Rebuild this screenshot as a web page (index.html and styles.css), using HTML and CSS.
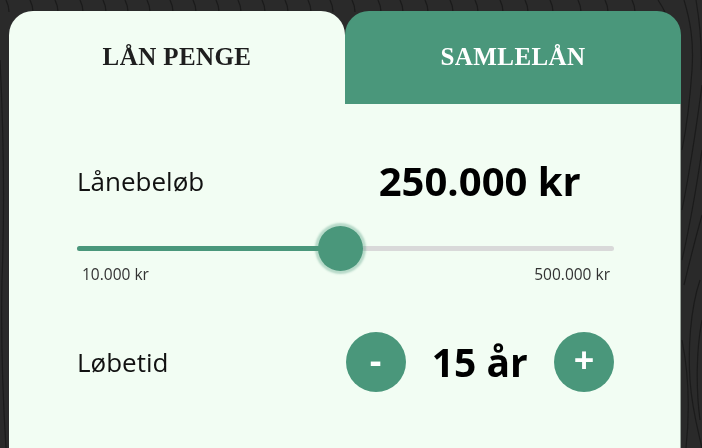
FILE: index.html
```html
<!DOCTYPE html>
<html lang="da">
<head>
<meta charset="utf-8">
<title>Lån penge</title>
<link rel="stylesheet" href="styles.css">
</head>
<body>
<svg class="backdrop" viewBox="0 0 702 448" preserveAspectRatio="none" aria-hidden="true">
  <g fill="none" stroke="#1b1b1b" stroke-width="1.2">
    <path d="M6 0 C8 4 9 8 9 12"/>
    <path d="M30 0 C32 4 33 8 33 12"/>
    <path d="M55 0 C57 4 58 8 58 12"/>
    <path d="M80 0 C82 4 83 8 83 12"/>
    <path d="M103 0 C105 4 106 8 106 12"/>
    <path d="M125 0 C127 4 128 8 128 12"/>
    <path d="M147 0 C149 4 150 8 150 12"/>
    <path d="M170 0 C172 4 173 8 173 12"/>
    <path d="M193 0 C195 4 196 8 196 12"/>
    <path d="M216 0 C218 4 219 8 219 12"/>
    <path d="M238 0 C240 4 241 8 241 12"/>
    <path d="M262 0 C264 4 265 8 265 12"/>
    <path d="M285 0 C287 4 288 8 288 12"/>
    <path d="M308 0 C310 4 311 8 311 12"/>
    <path d="M330 0 C332 4 333 8 333 12"/>
    <path d="M352 0 C354 4 355 8 355 12"/>
    <path d="M378 0 C380 4 381 8 381 12"/>
    <path d="M400 0 C402 4 403 8 403 12"/>
    <path d="M425 0 C427 4 428 8 428 12"/>
    <path d="M450 0 C452 4 453 8 453 12"/>
    <path d="M475 0 C477 4 478 8 478 12"/>
    <path d="M500 0 C502 4 503 8 503 12"/>
    <path d="M525 0 C527 4 528 8 528 12"/>
    <path d="M550 0 C552 4 553 8 553 12"/>
    <path d="M578 0 C580 4 581 8 581 12"/>
    <path d="M605 0 C607 4 608 8 608 12"/>
    <path d="M632 0 C634 4 635 8 635 12"/>
    <path d="M658 0 C662 6 664 10 666 14"/>
    <path d="M684 0 C690 20 694 40 692 70 C690 100 686 130 682 150"/>
    <path d="M696 0 C701 30 702 50 701 70"/>
    <path d="M702 85 C696 130 690 170 682 210"/>
    <path d="M702 150 C696 190 690 225 682 260"/>
    <path d="M702 215 C695 240 690 260 684 285"/>
    <path d="M700 280 C690 310 688 350 690 380 C692 410 698 430 702 448"/>
    <path d="M702 320 C696 350 696 390 700 420"/>
    <path d="M682 340 C688 370 690 410 686 448"/>
    <path d="M0 60 C3 120 5 200 2 280 C1 330 3 400 6 448"/>
  </g>
</svg>

<main class="calc">
  <nav class="tabs">
    <div class="tab tab-active">LÅN PENGE</div>
    <div class="tab tab-inactive">SAMLELÅN</div>
  </nav>
  <section class="panel">
    <div class="row row-amount">
      <div class="label">Lånebeløb</div>
      <div class="value">250.000 kr</div>
    </div>
    <div class="slider">
      <div class="track">
        <div class="fill" style="width:48.98%"></div>
        <div class="thumb" style="left:48.98%"></div>
      </div>
      <div class="range">
        <span>10.000 kr</span>
        <span>500.000 kr</span>
      </div>
    </div>
    <div class="row row-term">
      <div class="label">Løbetid</div>
      <div class="stepper">
        <button class="step" type="button">-</button>
        <span class="value">15 år</span>
        <button class="step" type="button">+</button>
      </div>
    </div>
  </section>
</main>
</body>
</html>
```

FILE: styles.css
```css
* {
  box-sizing: border-box;
}

html, body {
  margin: 0;
  padding: 0;
  height: 100%;
}

body {
  background: #2a2a2a;
  font-family: "Open Sans", "Noto Sans", sans-serif;
  overflow: hidden;
  position: relative;
}

.backdrop {
  position: fixed;
  inset: 0;
  width: 100%;
  height: 100%;
  z-index: 0;
}

.calc {
  position: relative;
  z-index: 1;
  width: 672px;
  margin: 11px 0 0 9px;
  display: flex;
  flex-direction: column;
}

.tabs {
  display: flex;
  height: 93px;
}

.tab {
  flex: 1 1 0;
  display: flex;
  align-items: center;
  justify-content: center;
  border-radius: 24px 24px 0 0;
  font-family: "Liberation Serif", "DejaVu Serif", serif;
  font-weight: 700;
  font-size: 25px;
  letter-spacing: 0.4px;
  padding-bottom: 2px;
}

.tab-active {
  background: #f2fdf3;
  color: #1e1e1e;
}

.tab-inactive {
  background: #4a977b;
  color: #ffffff;
}

.panel {
  background: #f2fdf3;
  padding: 52px 66px 60px 68px;
  height: 344px;
  border-right: 1px solid #9aa59d;
}

.row {
  display: grid;
  grid-template-columns: 1fr 1fr;
  align-items: center;
}

.row-amount {
  height: 50px;
}

.label {
  font-size: 26px;
  color: #111;
  line-height: 36px;
}

.value {
  font-weight: 700;
  font-size: 40px;
  color: #000;
  text-align: center;
  line-height: 50px;
}

.slider {
  margin-top: 40px;
}

.track {
  position: relative;
  height: 5px;
  border-radius: 3px;
  background: #d9d9d9;
}

.fill {
  height: 100%;
  border-radius: 3px;
  background: #4a977b;
}

.thumb {
  position: absolute;
  top: 50%;
  width: 45px;
  height: 45px;
  margin: -22.5px 0 0 -22.5px;
  border-radius: 50%;
  background: #4a977b;
  box-shadow: 0 0 2px 3px rgba(74, 151, 123, 0.35);
}

.range {
  display: flex;
  justify-content: space-between;
  margin-top: 13px;
  padding: 0 4px 0 5px;
  font-size: 15.5px;
  line-height: 20px;
  color: #333;
}

.row-term {
  margin-top: 48px;
  height: 60px;
}

.stepper {
  display: flex;
  align-items: center;
  justify-content: space-between;
}

.stepper .value {
  font-size: 39px;
}

.step {
  width: 60px;
  height: 60px;
  border: 0;
  padding: 0 0 4px;
  border-radius: 50%;
  background: #4a977b;
  color: #fff;
  font-family: "Open Sans", "Noto Sans", sans-serif;
  font-weight: 700;
  font-size: 36px;
  line-height: 1;
  display: flex;
  align-items: center;
  justify-content: center;
}
```
